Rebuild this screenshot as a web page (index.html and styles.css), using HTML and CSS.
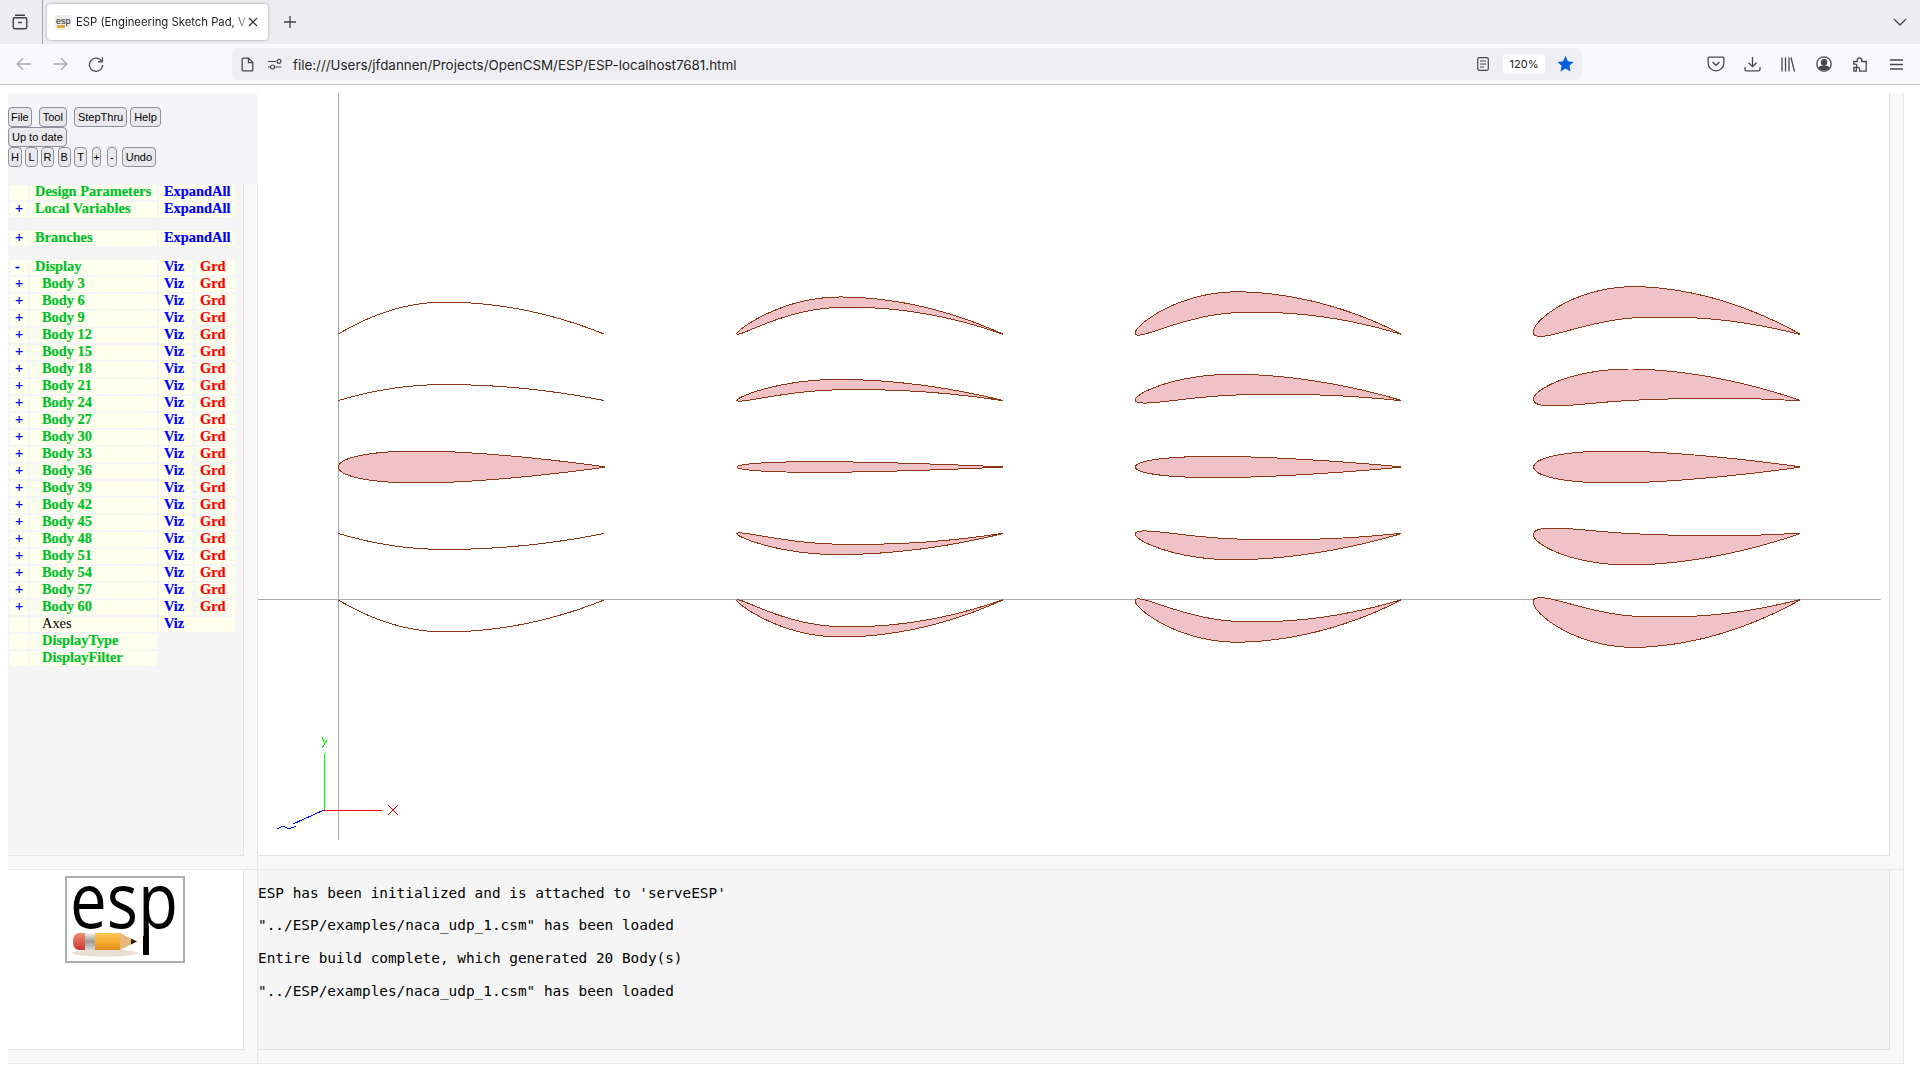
FILE: index.html
```html
<!DOCTYPE html>
<html lang="en">
<head>
<meta charset="utf-8">
<title>ESP (Engineering Sketch Pad)</title>
<link rel="stylesheet" href="styles.css">
</head>
<body>
<header class="chrome">
  <div class="tabstrip">
    <div class="tablist-btn">
      <svg class="ico" width="18" height="18" viewBox="0 0 18 18" fill="none" stroke="#3f3f45" stroke-width="1.4"><path d="M4 2.2h10M2.2 6.5c0-1 .7-1.7 1.7-1.7h10.2c1 0 1.700.7 1.700 1.700v7.600c0 1-.7 1.700-1.700 1.700H3.900c-1 0-1.700-.7-1.700-1.700z"/><path d="M7 9.500h4"/></svg>
    </div>
    <div class="tab">
      <svg class="favicon" width="16" height="15" viewBox="0 0 16 15"><rect width="16" height="15" fill="#eee"/><text x="1" y="9" class="favicon-text">esp</text><rect x="2" y="10" width="8" height="3" rx="1" fill="#e8a33a"/></svg>
      <span class="tab-title">ESP (Engineering Sketch Pad, V</span>
      <svg class="tab-close" width="10" height="10" viewBox="0 0 10 10" stroke="#2b2a33" stroke-width="1.2"><path d="M1 1l8 8M9 1l-8 8"/></svg>
    </div>
    <svg class="newtab" width="14" height="14" viewBox="0 0 14 14" stroke="#3f3f45" stroke-width="1.3"><path d="M7 1v12M1 7h12"/></svg>
    <svg class="chev" width="14" height="8" viewBox="0 0 14 8" fill="none" stroke="#4a4a50" stroke-width="1.3"><path d="M1 1l6 6 6-6"/></svg>
  </div>
  <div class="toolbar">
    <svg class="nav nav-back" width="16" height="14" viewBox="0 0 16 14" fill="none" stroke="#a9a9ae" stroke-width="1.4"><path d="M15 7H1.500M7 1.200L1.200 7 7 12.800"/></svg>
    <svg class="nav nav-fwd" width="16" height="14" viewBox="0 0 16 14" fill="none" stroke="#a9a9ae" stroke-width="1.4"><path d="M1 7h13.500M9 1.200L14.800 7 9 12.800"/></svg>
    <svg class="nav nav-reload" width="16" height="16" viewBox="0 0 16 16" fill="none" stroke="#55555b" stroke-width="1.4"><path d="M13.600 5.200A6.600 6.600 0 1 0 14.600 9"/><path d="M14.400 1.200v4.500H9.900"/></svg>
    <div class="urlbar">
      <svg class="url-page" width="13" height="15" viewBox="0 0 13 15" fill="none" stroke="#47474d" stroke-width="1.3"><path d="M1.200 2.200c0-.6.4-1 1-1h5.400l4.200 4.200v7.400c0 .6-.4 1-1 1H2.200c-.6 0-1-.4-1-1zM7.400 1.200v4.400h4.400"/></svg>
      <svg class="url-perm" width="15" height="12" viewBox="0 0 15 12" fill="none" stroke="#47474d" stroke-width="1.2"><path d="M1 3.500h8M1 9h2.500M8 9h6.500"/><circle cx="12" cy="3.300" r="2"/><circle cx="5.500" cy="9" r="2"/></svg>
      <span class="url-text">file:///Users/jfdannen/Projects/OpenCSM/ESP/ESP-localhost7681.html</span>
      <svg class="url-reader" width="12" height="14" viewBox="0 0 12 14" fill="none" stroke="#47474d" stroke-width="1.2"><rect x=".7" y=".7" width="10.600" height="12.600" rx="1.500"/><path d="M3 4h6M3 7h6M3 10h4"/></svg>
      <span class="zoom-badge">120%</span>
      <svg class="url-star" width="17" height="16" viewBox="0 0 17 16" fill="#0060df"><path d="M8.500 0l2.400 5.200 5.600.7-4.100 3.900 1.100 5.600-5-2.800-5 2.800 1.100-5.600L.5 5.900l5.600-.7z"/></svg>
    </div>
    <div class="tool-icons">
      <svg width="18" height="16" viewBox="0 0 18 16" fill="none" stroke="#47474d" stroke-width="1.3"><path d="M1.200 2.400c0-.7.5-1.200 1.200-1.200h13.200c.7 0 1.200.5 1.200 1.200v5.100c0 4-3.500 7.300-7.800 7.300S1.200 11.500 1.200 7.500zM5.500 6L9 9.300 12.500 6"/></svg>
      <svg width="17" height="16" viewBox="0 0 17 16" fill="none" stroke="#47474d" stroke-width="1.3"><path d="M8.500 1v9.500M4.500 6.700l4 4 4-4M1 11v2.500c0 .8.500 1.300 1.300 1.300h12.400c.8 0 1.300-.5 1.300-1.300V11"/></svg>
      <svg width="14" height="15" viewBox="0 0 14 15" fill="none" stroke="#47474d" stroke-width="1.3"><path d="M1 .5v14M4.500 .5v14M8 .5v14M10 .5l3.500 14"/></svg>
      <svg width="16" height="16" viewBox="0 0 16 16" fill="none" stroke="#47474d" stroke-width="1.3"><circle cx="8" cy="8" r="7.200"/><circle cx="8" cy="6.200" r="2.600" fill="#47474d"/><path d="M3 11.800c1.200-1.300 3-1.800 5-1.800s3.800.5 5 1.800c-1.200 1.400-3 2.200-5 2.200s-3.800-.8-5-2.200z" fill="#47474d"/></svg>
      <svg width="14" height="16" viewBox="0 0 14 16" fill="none" stroke="#47474d" stroke-width="1.3"><path d="M.8 5.500h3.500V4a2.200 2.200 0 1 1 4.400 0v1.500h4.500v9.700H6.500v-2.200a1.600 1.600 0 0 0-3.200 0v2.200H.8v-3.700h1.400a1.700 1.700 0 0 0 0-3.400H.8z"/></svg>
      <svg width="13" height="11" viewBox="0 0 13 11" stroke="#47474d" stroke-width="1.300"><path d="M0 1h13M0 5.500h13M0 10h13"/></svg>
    </div>
  </div>
</header>

<main class="page">
  <section class="pane pane-tree">
    <div class="buttons">
      <div class="btn-row">
        <button class="btn tight">File</button><button class="btn gap-tool">Tool</button><button class="btn gap-step">StepThru</button><button class="btn">Help</button>
      </div>
      <div class="btn-row">
        <button class="btn">Up to date</button>
      </div>
      <div class="btn-row btn-row-small">
        <button class="btn tight">H</button><button class="btn tight">L</button><button class="btn w13">R</button><button class="btn w13">B</button><button class="btn w13">T</button><button class="btn w9">+</button><button class="btn tight gap-minus">-</button><button class="btn gap-undo">Undo</button>
      </div>
    </div>
    <div class="scrollbox tree-box">
      <div class="scroll-body tree-body">
        <table class="tree">
          <colgroup><col class="c1"><col class="c2"><col class="c3"><col class="c4"></colgroup>
          <tbody>
            <tr><td class="cell"></td><td class="cell name">Design Parameters</td><td class="cell viz" colspan="2">ExpandAll</td></tr>
            <tr><td class="cell plus">+</td><td class="cell name">Local Variables</td><td class="cell viz" colspan="2">ExpandAll</td></tr>
            <tr class="spacer"><td colspan="4"></td></tr>
            <tr><td class="cell plus">+</td><td class="cell name">Branches</td><td class="cell viz" colspan="2">ExpandAll</td></tr>
            <tr class="spacer"><td colspan="4"></td></tr>
            <tr><td class="cell plus">-</td><td class="cell name">Display</td><td class="cell viz">Viz</td><td class="cell grd">Grd</td></tr>
            <tr><td class="cell plus">+</td><td class="cell name sub">Body 3</td><td class="cell viz">Viz</td><td class="cell grd">Grd</td></tr>
            <tr><td class="cell plus">+</td><td class="cell name sub">Body 6</td><td class="cell viz">Viz</td><td class="cell grd">Grd</td></tr>
            <tr><td class="cell plus">+</td><td class="cell name sub">Body 9</td><td class="cell viz">Viz</td><td class="cell grd">Grd</td></tr>
            <tr><td class="cell plus">+</td><td class="cell name sub">Body 12</td><td class="cell viz">Viz</td><td class="cell grd">Grd</td></tr>
            <tr><td class="cell plus">+</td><td class="cell name sub">Body 15</td><td class="cell viz">Viz</td><td class="cell grd">Grd</td></tr>
            <tr><td class="cell plus">+</td><td class="cell name sub">Body 18</td><td class="cell viz">Viz</td><td class="cell grd">Grd</td></tr>
            <tr><td class="cell plus">+</td><td class="cell name sub">Body 21</td><td class="cell viz">Viz</td><td class="cell grd">Grd</td></tr>
            <tr><td class="cell plus">+</td><td class="cell name sub">Body 24</td><td class="cell viz">Viz</td><td class="cell grd">Grd</td></tr>
            <tr><td class="cell plus">+</td><td class="cell name sub">Body 27</td><td class="cell viz">Viz</td><td class="cell grd">Grd</td></tr>
            <tr><td class="cell plus">+</td><td class="cell name sub">Body 30</td><td class="cell viz">Viz</td><td class="cell grd">Grd</td></tr>
            <tr><td class="cell plus">+</td><td class="cell name sub">Body 33</td><td class="cell viz">Viz</td><td class="cell grd">Grd</td></tr>
            <tr><td class="cell plus">+</td><td class="cell name sub">Body 36</td><td class="cell viz">Viz</td><td class="cell grd">Grd</td></tr>
            <tr><td class="cell plus">+</td><td class="cell name sub">Body 39</td><td class="cell viz">Viz</td><td class="cell grd">Grd</td></tr>
            <tr><td class="cell plus">+</td><td class="cell name sub">Body 42</td><td class="cell viz">Viz</td><td class="cell grd">Grd</td></tr>
            <tr><td class="cell plus">+</td><td class="cell name sub">Body 45</td><td class="cell viz">Viz</td><td class="cell grd">Grd</td></tr>
            <tr><td class="cell plus">+</td><td class="cell name sub">Body 48</td><td class="cell viz">Viz</td><td class="cell grd">Grd</td></tr>
            <tr><td class="cell plus">+</td><td class="cell name sub">Body 51</td><td class="cell viz">Viz</td><td class="cell grd">Grd</td></tr>
            <tr><td class="cell plus">+</td><td class="cell name sub">Body 54</td><td class="cell viz">Viz</td><td class="cell grd">Grd</td></tr>
            <tr><td class="cell plus">+</td><td class="cell name sub">Body 57</td><td class="cell viz">Viz</td><td class="cell grd">Grd</td></tr>
            <tr><td class="cell plus">+</td><td class="cell name sub">Body 60</td><td class="cell viz">Viz</td><td class="cell grd">Grd</td></tr>
            <tr><td class="cell"></td><td class="cell name sub plain">Axes</td><td class="cell viz" colspan="2">Viz</td></tr>
            <tr><td class="cell"></td><td class="cell name sub">DisplayType</td></tr>
            <tr><td class="cell"></td><td class="cell name sub">DisplayFilter</td></tr>
          </tbody>
        </table>
      </div>
      <div class="gutter-right"></div>
    </div>
    <div class="gutter-bottom"></div>
  </section>

  <section class="pane pane-canvas">
    <div class="scrollbox canvas-box">
      <div class="scroll-body canvas-body">
        <svg id="viewport" class="viewport" width="1631" height="762" viewBox="258 93 1631 762" shape-rendering="crispEdges">
          <path d="M338.500 93V840M258 599.500H1881" stroke="#aaa" stroke-width="1" fill="none"/>
          <g id="foils"></g>
          <path d="M324.500 810V753" stroke="#00ff00" fill="none"/>
          <path d="M322 748L327 740M322 737L324.500 743" stroke="#00ff00" fill="none"/>
          <path d="M324 810H381.500" stroke="#ff0000" fill="none"/>
          <path d="M388 805L398 815M398 805L388 815" stroke="#ff0000" fill="none"/>
          <path d="M324 810L293 824" stroke="#0000ff" fill="none"/>
          <path d="M277 829L283 826L289 829L296 826" stroke="#0000ff" fill="none"/>
        </svg>
      </div>
      <div class="gutter-right"></div>
    </div>
    <div class="gutter-bottom"></div>
  </section>

  <section class="pane pane-logo">
    <div class="scrollbox logo-box">
      <div class="scroll-body logo-body">
        <svg class="logo" width="120" height="87" viewBox="0 0 120 87">
          <defs>
            <linearGradient id="wood" x1="0" y1="0" x2="0" y2="1"><stop offset="0" stop-color="#fdc85a"/><stop offset=".55" stop-color="#f6ab30"/><stop offset="1" stop-color="#d98a1c"/></linearGradient>
            <linearGradient id="metal" x1="0" y1="0" x2="0" y2="1"><stop offset="0" stop-color="#f4f4f4"/><stop offset=".5" stop-color="#9a9a9a"/><stop offset="1" stop-color="#d8d8d8"/></linearGradient>
            <linearGradient id="rub" x1="0" y1="0" x2="0" y2="1"><stop offset="0" stop-color="#f28a78"/><stop offset="1" stop-color="#c9362c"/></linearGradient>
          </defs>
          <rect x="1" y="1" width="118" height="85" fill="#fff" stroke="#a9aeb1" stroke-width="2"/>
          <text x="5" y="52" class="logo-text" textLength="108" lengthAdjust="spacingAndGlyphs">esp</text>
          <rect x="78" y="60" width="6" height="19" fill="#000"/>
          <ellipse cx="40" cy="77" rx="33" ry="3.500" fill="#eadfd0"/>
          <path d="M20 57h-6c-4 0-6 4-6 8.500s2 8.500 6 8.500h6z" fill="url(#rub)"/>
          <rect x="20" y="57" width="10" height="17" fill="url(#metal)"/>
          <rect x="30" y="57" width="25" height="17" fill="url(#wood)"/>
          <path d="M55 57L72 65.500 55 74z" fill="#e8b77c"/>
          <path d="M66 62.500L72 65.500 66 68.500z" fill="#222"/>
        </svg>
      </div>
      <div class="gutter-right"></div>
    </div>
    <div class="gutter-bottom"></div>
  </section>

  <section class="pane pane-console">
    <div class="scrollbox console-box">
      <div class="scroll-body console-body">
        <p class="msg">ESP has been initialized and is attached to 'serveESP'</p>
        <p class="msg">"../ESP/examples/naca_udp_1.csm" has been loaded</p>
        <p class="msg">Entire build complete, which generated 20 Body(s)</p>
        <p class="msg">"../ESP/examples/naca_udp_1.csm" has been loaded</p>
      </div>
      <div class="gutter-right"></div>
    </div>
    <div class="gutter-bottom"></div>
  </section>
</main>
<script src="script.js"></script>
</body>
</html>
```
FILE: styles.css
```css
* { box-sizing: border-box; }
html, body { margin: 0; height: 100%; background: #fff; overflow: hidden; }
body { font-family: "Liberation Sans", Arial, sans-serif; }
svg { display: block; }

.chrome { height: 85px; display: flex; flex-direction: column; border-bottom: 1px solid #c8c8cc; }
.tabstrip { height: 44px; background: #edecf1; display: flex; align-items: center; }
.tablist-btn { width: 43px; height: 44px; border-right: 1px solid #a8a8ad; display: flex; align-items: center; padding-left: 11px; }
.tab { margin-left: 4px; width: 221px; height: 36px; background: #fff; border-radius: 4px; box-shadow: 0 0 3px rgba(0,0,0,.35); display: flex; align-items: center; padding-left: 8px; }
.favicon { flex: none; }
.favicon-text { font: 9px "Liberation Sans", sans-serif; fill: #222; }
.tab-title { margin-left: 5px; width: 171px; overflow: hidden; white-space: nowrap; font: 11.3px "Inter", sans-serif; color: #1f1f24; -webkit-mask-image: linear-gradient(90deg, #000 93%, rgba(0,0,0,.25)); mask-image: linear-gradient(90deg, #000 93%, rgba(0,0,0,.25)); }
.tab-close { margin-left: 1px; flex: none; }
.newtab { margin-left: 15px; }
.chev { margin-left: auto; margin-right: 13px; }

.toolbar { flex: 1; background: #f9f9fb; display: flex; align-items: center; padding-left: 16px; }
.nav-fwd { margin-left: 20px; }
.nav-reload { margin-left: 20px; }
.urlbar { margin-left: 128px; width: 1350px; height: 32px; background: #efeff3; border-radius: 6px; display: flex; align-items: center; padding-left: 9px; }
.url-perm { margin-left: 13px; }
.url-text { margin-left: 11px; padding-top: 1px; font: 13.4px "Inter", sans-serif; color: #1f1f24; white-space: nowrap; }
.url-reader { margin-left: auto; }
.zoom-badge { margin-left: 14px; width: 42px; height: 20px; background: #fff; border-radius: 4px; font: 11px/20px "Inter", sans-serif; color: #222; text-align: center; }
.url-star { margin-left: 12px; margin-right: 8px; }
.tool-icons { display: grid; grid-template-columns: repeat(6, 36px); justify-items: center; align-items: center; margin-left: 116px; }

.page { display: grid; grid-template-columns: 250px 1646px; grid-template-rows: 777px 194px; margin: 8px 0 0 8px; }
.pane { display: flex; flex-direction: column; min-height: 0; background: #f8f8f8; border-right: 1px solid #e8e8e8; border-bottom: 1px solid #e8e8e8; }
.scrollbox { flex: 1; display: flex; min-height: 0; }
.scroll-body { flex: 1; min-width: 0; border-right: 1px solid #e4e4e4; border-bottom: 1px solid #e4e4e4; overflow: hidden; }
.gutter-right { width: 13px; flex: none; }
.gutter-bottom { height: 13px; flex: none; }

.buttons { height: 90px; background: #f5f5f7; padding-top: 14px; display: flex; flex-direction: column; margin-right: -1px; }
.btn-row { display: flex; gap: 3px; height: 20px; }
.btn-row-small { gap: 3.5px; }
.btn { height: 20px; padding: 0 3px; border: 1px solid #8f8f9d; border-radius: 4px; background: #e9e9ed; color: #000; font: 11px/18px "Liberation Sans", sans-serif; }
.tight { padding: 0 2px; }
.w13 { width: 13px; padding: 0; }
.w9 { width: 9px; padding: 0; margin-left: 1.5px; }
.gap-tool { margin-left: 4px; }
.gap-step { margin-left: 4px; }
.gap-minus { margin-left: 2.5px; }
.gap-undo { margin-left: 1.5px; }

.tree-body { background: #f5f5f5; }
.tree { border-collapse: separate; border-spacing: 2px; table-layout: fixed; width: 229px; font: bold 14.4px/13px "Liberation Serif", "Times New Roman", serif; -webkit-text-stroke: .2px; }
.c1 { width: 18px; } .c2 { width: 127px; } .c3 { width: 34px; } .c4 { width: 40px; }
.cell { height: 15px; padding: 0 0 0 5px; background: #ffffee; white-space: nowrap; vertical-align: top; }
.plus { color: #0000ff; }
.name { color: #00bf2a; }
.sub { padding-left: 12px; }
.plain { color: #000; font-weight: normal; -webkit-text-stroke: 0; }
.viz { color: #0000ff; }
.grd { color: #ff0000; }
.spacer td { height: 10px; padding: 0; }

.canvas-body { background: #fff; }
.viewport { width: 1631px; height: 762px; }

.logo-body { background: #fff; display: flex; justify-content: flex-start; align-items: flex-start; padding: 6px 0 0 57px; }
.logo-text { font: 400 77px "Open Sans", "Lato", sans-serif; fill: #000; }

.console-body { background: #f5f5f5; padding-top: 6.7px; }
.msg { margin: 0; height: 32.7px; font: 14.4px/32.7px "DejaVu Sans Mono", "Liberation Mono", monospace; color: #000; white-space: pre; }
```
FILE: script.js
```js
// Camber / thickness sweep of NACA sections drawn into the viewport.
(function () {
  var chord = 265.5, dx = 398.4, dy = 66.5, x0 = 338.5, y0 = 334;
  var cambers = [0.12, 0.06, 0, -0.06, -0.12];
  var thick = [0, 0.04, 0.08, 0.12];
  var p = 0.4;
  var g = document.getElementById('foils');
  function foil(m, t, ox, oy) {
    var up = [], lo = [];
    for (var i = 0; i <= 120; i++) {
      var b = i / 120 * Math.PI, x = (1 - Math.cos(b)) / 2;
      var yc, dyc;
      if (x < p) { yc = m / (p * p) * (2 * p * x - x * x); dyc = 2 * m / (p * p) * (p - x); }
      else { yc = m / ((1 - p) * (1 - p)) * (1 - 2 * p + 2 * p * x - x * x); dyc = 2 * m / ((1 - p) * (1 - p)) * (p - x); }
      var yt = 5 * t * (0.2969 * Math.sqrt(x) - 0.126 * x - 0.3516 * x * x + 0.2843 * x * x * x - 0.1015 * x * x * x * x);
      var th = Math.atan(dyc);
      up.push([ox + chord * (x - yt * Math.sin(th)), oy - chord * (yc + yt * Math.cos(th))]);
      lo.push([ox + chord * (x + yt * Math.sin(th)), oy - chord * (yc - yt * Math.cos(th))]);
    }
    var pts = up.reverse().concat(t > 0 ? lo.slice(1) : []);
    var d = 'M' + pts.map(function (q) { return q[0].toFixed(2) + ' ' + q[1].toFixed(2); }).join('L');
    var el = document.createElementNS('http://www.w3.org/2000/svg', 'path');
    if (t > 0) d += 'Z';
    el.setAttribute('d', d);
    el.setAttribute('fill', t > 0 ? '#eec2c7' : 'none');
    el.setAttribute('stroke', '#8c3714');
    el.setAttribute('stroke-width', '1');
    g.appendChild(el);
  }
  cambers.forEach(function (m, r) {
    thick.forEach(function (t, c) {
      var tt = (m === 0 && t === 0) ? 0.12 : t;
      foil(m, tt, x0 + c * dx, y0 + r * dy);
    });
  });
})();
```
